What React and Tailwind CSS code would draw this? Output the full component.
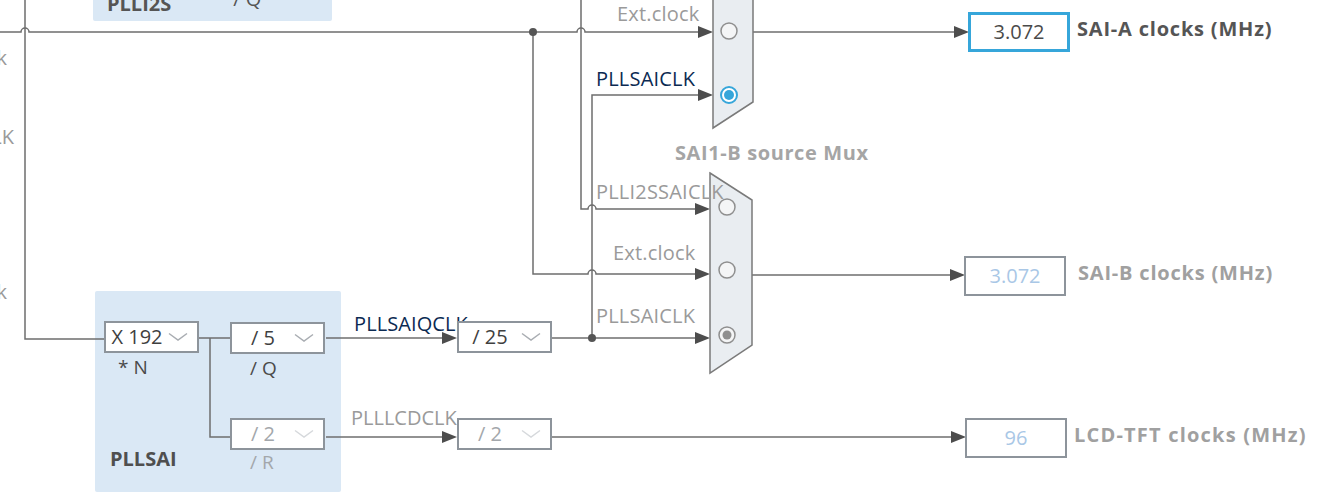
import React from 'react'

const font = { fontFamily: '"Open Sans", "Noto Sans", sans-serif' }

function Chevron({ light }) {
  return (
    <svg width="20" height="10" viewBox="0 0 20 10" className="shrink-0">
      <path d="M1 1.5 L10 8 L19 1.5" fill="none" stroke={light ? '#d6d9dc' : '#a9adb2'} strokeWidth="1.5" />
    </svg>
  )
}

function Drop({ label, disabled }) {
  return (
    <div className="flex items-center w-[95px] h-[32px] bg-white border-2 border-[#8d949b] pr-[5px]">
      <span className={`w-[62px] text-center text-[20px] leading-none ${disabled ? 'text-[#a3a7ab]' : 'text-[#3f3f3f]'}`}>
        {label}
      </span>
      <Chevron light={disabled} />
    </div>
  )
}

function Divider({ x, y, label, caption, disabled, captionClass = 'mt-[3px] pl-[20px]' }) {
  return (
    <div className="absolute flex flex-col" style={{ left: x, top: y }}>
      <Drop label={label} disabled={disabled} />
      {caption && (
        <div className={`text-[19px] leading-[22px] ${captionClass} ${disabled ? 'text-[#a3a7ab]' : 'text-[#4a4a4a]'}`}>
          {caption}
        </div>
      )}
    </div>
  )
}

function Output({ x, y, value, label, active, gap = 'gap-[7px]', track = 'tracking-[0.8px]' }) {
  return (
    <div className={`absolute flex items-center ${gap}`} style={{ left: x, top: y }}>
      <div
        className={`flex items-center justify-center w-[102px] h-[40px] bg-white text-[20px] ${
          active ? 'border-[3px] border-[#36a6da] text-[#4a4a4a]' : 'border-2 border-[#8d949b] text-[#a9c7e6]'
        }`}
      >
        {value}
      </div>
      <div
        className={`pb-[6px] whitespace-nowrap font-bold text-[20px] leading-[22px] ${track} ${
          active ? 'text-[#555]' : 'text-[#a0a0a0]'
        }`}
      >
        {label}
      </div>
    </div>
  )
}

function Label({ x, y, children, className = '' }) {
  return (
    <div className={`absolute whitespace-nowrap text-[20px] leading-[22px] ${className}`} style={{ left: x, top: y }}>
      {children}
    </div>
  )
}

const Arrow = ({ x, y }) => <polygon points={`${x - 15},${y - 6} ${x},${y} ${x - 15},${y + 6}`} fill="#4d4d4d" />

function Wires() {
  const s = { fill: 'none', stroke: '#6e6e6e', strokeWidth: 1.5 }
  return (
    <svg className="absolute left-0 top-0" width="1334" height="502">
      {/* top line with hops */}
      <path d="M0 32 H21 a4 4 0 0 1 8 0 H577 a4 4 0 0 1 8 0 H700" {...s} />
      <Arrow x={713} y={32} />
      {/* left vertical to X192 */}
      <path d="M25 0 V339 H104" {...s} />
      {/* x=533 branch to mux B ext.clock */}
      <path d="M533 32 V274 H588 a4 4 0 0 1 8 0 H697" {...s} />
      <Arrow x={710} y={274} />
      <circle cx="533" cy="32" r="4" fill="#555" />
      {/* x=581 branch (PLLI2SSAICLK) */}
      <path d="M581 0 V209 H588 a4 4 0 0 1 8 0 H697" {...s} />
      <Arrow x={710} y={209} />
      {/* x=592 branch PLLSAICLK to mux A */}
      <path d="M592 338 V95 H700" {...s} />
      <Arrow x={713} y={95} />
      {/* /25 to mux B */}
      <path d="M552 338 H697" {...s} />
      <Arrow x={710} y={338} />
      <circle cx="592" cy="338" r="4" fill="#555" />
      {/* mux outputs */}
      <path d="M753 32 H955" {...s} />
      <Arrow x={969} y={32} />
      <path d="M752 275 H951" {...s} />
      <Arrow x={965} y={275} />
      {/* PLLSAI internals */}
      <path d="M199 338 H230" {...s} />
      <path d="M210 338 V437 H230" {...s} />
      <path d="M326 338 H443" {...s} />
      <Arrow x={457} y={338} />
      <path d="M326 437 H443" {...s} />
      <Arrow x={457} y={437} />
      <path d="M552 437 H952" {...s} />
      <Arrow x={966} y={437} />
      {/* mux A */}
      <polygon points="713,-40 753,-14 753,102 713,128" fill="#e9edf1" stroke="#7a7a7a" strokeWidth="1.5" />
      <circle cx="729" cy="31" r="8" fill="#f4f5f6" stroke="#8f8f8f" strokeWidth="1.5" />
      <circle cx="729" cy="95" r="8" fill="#fff" stroke="#36a6da" strokeWidth="2" />
      <circle cx="729" cy="95" r="5" fill="#36a6da" />
      {/* mux B */}
      <polygon points="710,173 752,200 752,345 710,373" fill="#e9edf1" stroke="#7a7a7a" strokeWidth="1.5" />
      <circle cx="727" cy="207" r="8" fill="#f4f5f6" stroke="#8f8f8f" strokeWidth="1.5" />
      <circle cx="727" cy="270" r="8" fill="#f4f5f6" stroke="#8f8f8f" strokeWidth="1.5" />
      <circle cx="727" cy="335" r="8" fill="#f4f5f6" stroke="#8f8f8f" strokeWidth="1.5" />
      <circle cx="727" cy="335" r="4.5" fill="#8f8f8f" />
    </svg>
  )
}

export default function App() {
  return (
    <div className="relative w-[1334px] h-[502px] overflow-hidden bg-white" style={font}>
      {/* PLL blocks */}
      <div className="absolute left-[93px] top-[-10px] w-[239px] h-[31px] flex items-end gap-[62px] pl-[14px] bg-[#dae8f5] rounded-[2px]">
        <div className="mb-[6px] text-[20px] leading-[22px] font-bold text-[#555]">PLLI2S</div>
        <div className="mb-[11px] text-[20px] leading-[22px] text-[#555]">/ Q</div>
      </div>
      <div className="absolute left-[95px] top-[291px] w-[246px] h-[201px] bg-[#dae8f5] rounded-[2px]" />

      <Wires />

      {/* left labels, cut by the edge */}
      <Label x={-60} y={47} className="w-[67px] text-right text-[#9a9a9a]">clock</Label>
      <Label x={-90} y={126} className="w-[104px] text-right text-[#9a9a9a]">PLLCLK</Label>
      <Label x={-60} y={281} className="w-[67px] text-right text-[#9a9a9a]">clock</Label>

      {/* mux labels */}
      <Label x={617} y={3} className="text-[#9a9a9a] tracking-[0.2px]">Ext.clock</Label>
      <Label x={596} y={68} className="text-[#0b2a52] tracking-[0.2px]">PLLSAICLK</Label>
      <Label x={675} y={142} className="font-bold text-[#a5a5a5] text-[19px] tracking-[0.6px]">SAI1-B source Mux</Label>
      <Label x={596} y={181} className="text-[#9a9a9a] text-[19px] tracking-[0.2px]">PLLI2SSAICLK</Label>
      <Label x={613} y={242} className="text-[#9a9a9a] tracking-[0.2px]">Ext.clock</Label>
      <Label x={596} y={305} className="text-[#9a9a9a] tracking-[0.2px]">PLLSAICLK</Label>

      {/* PLLSAI */}
      <Divider x={104} y={321} label="X 192" caption="* N" captionClass="mt-[3px] pl-[14px]" />
      <Divider x={230} y={322} label="/ 5" caption="/ Q" />
      <Divider x={230} y={418} label="/ 2" caption="/ R" disabled captionClass="mt-[1px] pl-[20px]" />
      <Label x={110} y={448} className="font-bold text-[#4f4f4f]">PLLSAI</Label>

      <Label x={354} y={313} className="text-[#0b2a52] tracking-[0.1px]">PLLSAIQCLK</Label>
      <Label x={351} y={407} className="text-[#9a9a9a]">PLLLCDCLK</Label>
      <Divider x={457} y={321} label="/ 25" />
      <Divider x={457} y={418} label="/ 2" disabled />

      {/* outputs */}
      <Output x={968} y={12} value="3.072" label="SAI-A clocks (MHz)" active />
      <Output x={964} y={256} value="3.072" label="SAI-B clocks (MHz)" gap="gap-[12px]" />
      <Output x={965} y={418} value="96" label="LCD-TFT clocks (MHz)" track="tracking-[1.2px]" />
    </div>
  )
}
